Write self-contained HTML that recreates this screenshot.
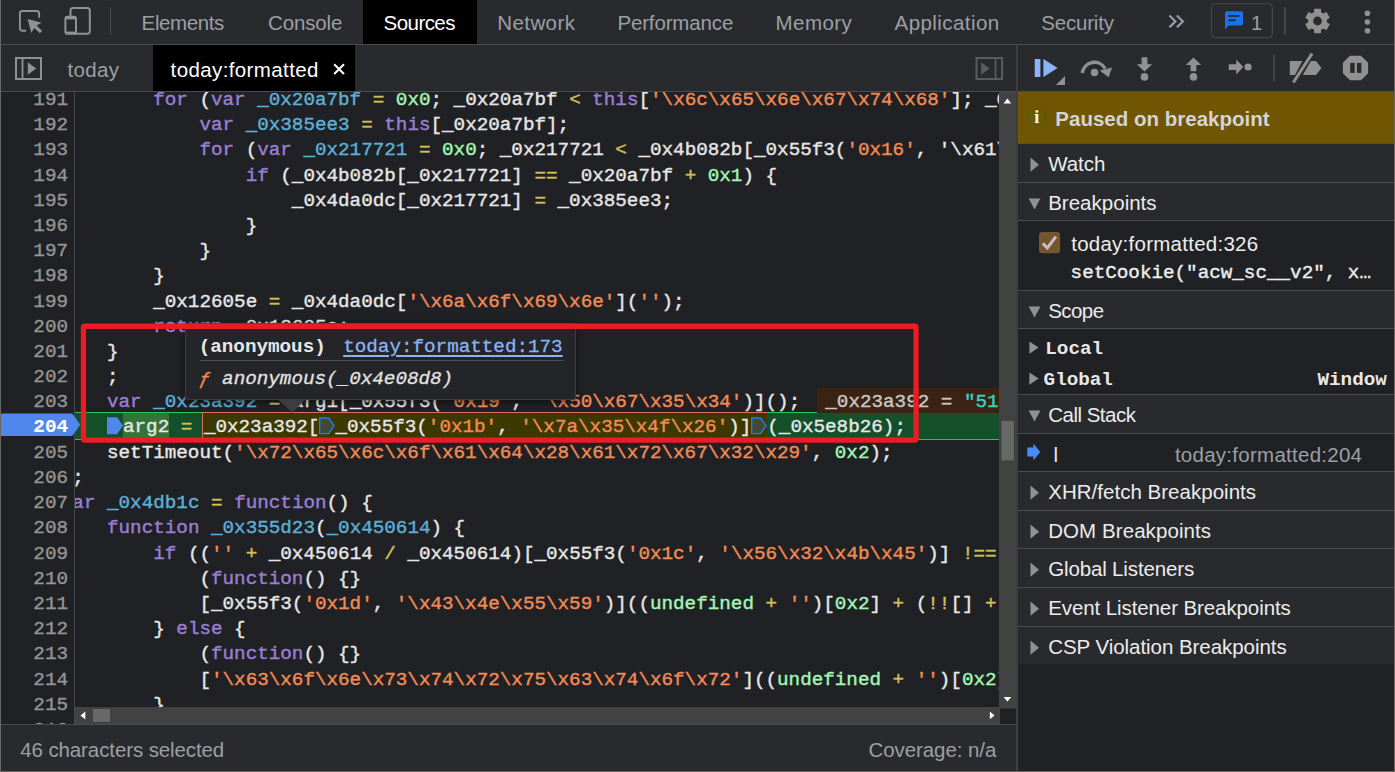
<!DOCTYPE html>
<html><head><meta charset="utf-8">
<style>
*{box-sizing:border-box;margin:0;padding:0}
html,body{width:1395px;height:772px;overflow:hidden;background:#202124}
body{position:relative;font-family:"Liberation Sans",sans-serif;color:#9aa0a6}
.abs{position:absolute}
#top{left:0;top:0;width:1395px;height:45px;background:#292a2d;border-bottom:1px solid #494c50}
.tab{position:absolute;top:0;height:44px;line-height:46.4px;font-size:20.5px;color:#9aa0a6;white-space:pre}
.tab.sel,.ftab.sel{background:#000;color:#fff}
#row2l{left:0;top:45px;width:1016px;height:47px;background:#292a2d;border-bottom:1px solid #494c50}
#row2r{left:1018px;top:45px;width:377px;height:47px;background:#292a2d;border-bottom:1px solid #494c50}
.ftab{position:absolute;top:0;height:46px;line-height:49px;font-size:20.5px;color:#9aa0a6;white-space:pre}
#code{left:0;top:92px;width:999px;height:632px;background:#202124;overflow:hidden;font-family:"Liberation Mono",monospace;font-size:19.25px;color:#e6e6e6;-webkit-text-stroke:0.4px}
#gutter{left:0;top:0;width:75px;height:633px;background:#202124;border-right:1px solid #45474b;z-index:3}
.ln{position:absolute;left:0;width:68px;text-align:right;color:#949494;height:25.2px;line-height:25.2px;white-space:pre}
.cl{position:absolute;left:60.8px;height:25.2px;line-height:25.2px;white-space:pre}
.k{color:#9a7fd5}.d{color:#5db0d7}.n{color:#a1f7b5}.s{color:#f28b54}.o{color:#d2c057}
#vsb{left:999px;top:92px;width:17px;height:615px;background:#424242}
#hsb{left:75px;top:707px;width:941px;height:18px;background:#424242}
#status{left:0;top:724px;width:1016px;height:47px;background:#292a2d;border-top:1px solid #494c50;font-size:20.5px;line-height:46px}
#split{left:1016px;top:45px;width:2px;height:727px;background:#3c3e42}
#right{left:1018px;top:92px;width:377px;height:680px;background:#202124}
.sec{position:absolute;left:0;width:376px;height:39px;background:#292a2d;border-top:1px solid #494c50;color:#ececec;font-size:20.5px;line-height:39px;white-space:pre}

.ln.cur{color:#fff;font-weight:bold;-webkit-text-stroke:0.15px}
.exec{position:absolute;left:75px;width:924px;height:28px;background:#14512a;border-top:1px solid #23c85a;border-bottom:1px solid #23c85a;top:320px}
.bm{display:inline-block;width:16px;height:18px;vertical-align:-3.6px}
.tkbg{position:absolute;left:123px;top:321px;width:46px;height:26px;background:#347438}
.selbg{position:absolute;left:202px;top:320px;width:565px;height:27px;background:#3b3800;border-top:1px solid #d87060;border-left:1px solid #d87060}
.iv{position:absolute;z-index:1;left:817.3px;top:296.4px;height:24.6px;width:200px;padding-left:8px;line-height:28px;background:#3a2312;color:#c8c8c8;white-space:pre;overflow:hidden}
.ivs{color:#35d4c7}

.sec{left:0;width:377px}
.sec .tx{position:absolute;left:30.2px;top:0}
.tri{position:absolute}
.rt{position:absolute;white-space:pre;font-size:20.5px;line-height:24px}
.mono{font-family:"Liberation Mono",monospace;font-size:19.25px;-webkit-text-stroke:0.4px}
#banner{left:0;top:0;width:377px;height:51px;background:#705602}

#glm{left:0;top:320.8px;width:82px;height:24px}
#pop{left:185px;top:323px;width:391px;height:77px;background:#242528;border:1px solid #3c3d41;border-radius:3px;box-shadow:0 2px 6px rgba(0,0,0,.5);z-index:5;font-family:"Liberation Mono",monospace;font-size:19.25px}
.pt{white-space:pre;line-height:25px;-webkit-text-stroke:0.3px}
#redbox{left:78px;top:320px;z-index:7}
</style></head><body>
<div id="top" class="abs">
<svg class="abs" style="left:0;top:0" width="130" height="44" viewBox="0 0 130 44">
<g fill="none" stroke="#919191" stroke-width="1.9">
<path d="M26.2 30.8H22.4a2.5 2.5 0 0 1-2.5-2.5V13.5a2.5 2.5 0 0 1 2.5-2.5H36.6a2.5 2.5 0 0 1 2.5 2.5V17.8"/>
</g>
<path d="M27.7 19L41.5 22.7L36.6 25.6L42.2 31L39.9 33.3L34.3 27.9L31.3 32.9Z" fill="#919191"/>
<g fill="none" stroke="#919191" stroke-width="2">
<path d="M70.5 16V10.4a2.5 2.5 0 0 1 2.5-2.5H87.3a2.5 2.5 0 0 1 2.5 2.5V31.2a2.5 2.5 0 0 1-2.5 2.5H75"/>
<rect x="65.4" y="16.8" width="10.6" height="16.9" rx="2"/>
</g>
<rect x="65.4" y="16" width="10.6" height="3.4" fill="#919191"/><rect x="65.4" y="31.6" width="10.6" height="2.6" fill="#919191"/>
<rect x="110" y="7" width="1" height="28" fill="#494c50"/>
</svg>
<span class="tab" style="left:141.6px;letter-spacing:-0.384px">Elements</span>
<span class="tab" style="left:268px;letter-spacing:-0.146px">Console</span>
<span class="tab sel" style="left:363px;width:114px;padding-left:20.6px;letter-spacing:-0.560px">Sources</span>
<span class="tab" style="left:497.3px;letter-spacing:0.402px">Network</span>
<span class="tab" style="left:617.4px;letter-spacing:-0.142px">Performance</span>
<span class="tab" style="left:775.6px;letter-spacing:0.442px">Memory</span>
<span class="tab" style="left:894.6px;letter-spacing:0.428px">Application</span>
<span class="tab" style="left:1041.2px;letter-spacing:-0.183px">Security</span>
<svg class="abs" style="left:1160px;top:0" width="235" height="44" viewBox="1160 0 235 44">
<g fill="none" stroke="#9aa0a6" stroke-width="2.1"><path d="M1169.4 15.5L1175.4 21.4L1169.4 27.3"/><path d="M1176.9 15.5L1182.9 21.4L1176.9 27.3"/></g>
<rect x="1211.4" y="3.7" width="61" height="34" rx="4" fill="none" stroke="#494c50" stroke-width="1"/>
<path d="M1227 11.3H1241a2 2 0 0 1 2 2V23.6a2 2 0 0 1-2 2H1228.6L1225 29.6V13.3a2 2 0 0 1 2-2Z" fill="#1a73e8"/>
<rect x="1228.4" y="15" width="11" height="1.8" fill="#292a2d"/><rect x="1228.4" y="19.4" width="7.4" height="1.8" fill="#292a2d"/>
<rect x="1284.1" y="7.3" width="1.5" height="27.5" fill="#494c50"/>
<g fill="#919191"><circle cx="1367.4" cy="13.2" r="2.8"/><circle cx="1367.4" cy="22" r="2.8"/><circle cx="1367.4" cy="30.8" r="2.8"/></g>
<g transform="translate(1317.5 21)"><g fill="#919191">
<circle r="9.5"/>
<g id="teeth"><rect x="-3.5" y="-12.3" width="7" height="24.6" rx="0.8"/></g>
<rect x="-3.5" y="-12.3" width="7" height="24.6" rx="0.8" transform="rotate(60)"/><rect x="-3.5" y="-12.3" width="7" height="24.6" rx="0.8" transform="rotate(120)"/>
</g><circle r="4.4" fill="#292a2d"/></g>
</svg>
<span class="tab" style="left:1251px;color:#9aa0a6;letter-spacing:0">1</span>
</div>
<div id="row2l" class="abs">
<svg class="abs" style="left:0;top:0" width="60" height="46" viewBox="0 45 60 46">
<rect x="16" y="58" width="25" height="21" fill="none" stroke="#919191" stroke-width="2"/>
<rect x="21.6" y="58" width="1.8" height="21" fill="#919191"/>
<path d="M27.8 62.2L36.2 68.5L27.8 74.8Z" fill="#919191"/>
</svg>
<span class="ftab" style="left:67.4px;letter-spacing:0.389px">today</span>
<span class="ftab sel" style="left:153px;width:202px;padding-left:17.6px;letter-spacing:0.383px">today:formatted</span>
<svg class="abs" style="left:330px;top:14px" width="20" height="20" viewBox="0 0 20 20"><path d="M4.2 5.2L14 15M14 5.2L4.2 15" stroke="#fff" stroke-width="2" fill="none"/></svg>
<svg class="abs" style="left:970px;top:0" width="40" height="46" viewBox="970 45 40 46">
<rect x="976.5" y="58" width="25.6" height="21" fill="none" stroke="#5a5b5e" stroke-width="2"/>
<rect x="994.6" y="58" width="1.8" height="21" fill="#5a5b5e"/>
<path d="M981.2 62.2L989.6 68.5L981.2 74.8Z" fill="#5a5b5e"/>
</svg>
</div>
<div id="row2r" class="abs">
<svg class="abs" style="left:0;top:0" width="376" height="46" viewBox="1018 45 376 46">
<g fill="#8ab4f8"><rect x="1034.7" y="59" width="5.7" height="18"/><path d="M1043.4 59L1057.6 68L1043.4 77Z"/></g>
<g fill="#919191">
<path d="M1065 75.9V85H1056Z"/>
<circle cx="1094.5" cy="72.5" r="3.8"/>
<path d="M1082.3 73A12.3 12.3 0 0 1 1105.2 68.6" fill="none" stroke="#919191" stroke-width="3.5"/><path d="M1112.2 67.6L1099.6 70.4L1108.6 77.2Z"/>
<path d="M1141.6 57.3H1147.4V64.2H1152.2L1144.5 71.4L1136.8 64.2H1141.6Z"/><circle cx="1144.5" cy="76.9" r="3.8"/>
<path d="M1193.5 57.4L1201.2 65H1196.4V71.2H1190.6V65H1185.8Z"/><circle cx="1193.5" cy="76.9" r="3.8"/>
<path d="M1228.8 64.2H1236.2V59.6L1243.3 67L1236.2 74.6V69.9H1228.8Z"/><circle cx="1248.1" cy="67" r="3.6"/>
<rect x="1273.3" y="54" width="1.4" height="28" fill="#4a4c50"/>
<path d="M1289.8 61H1302.3L1295 74.9H1289.8Z"/>
<path d="M1310.8 61H1316L1321.4 67.9L1316 74.9H1302.8Z"/>
<path d="M1310.8 52.8L1313.4 54.2L1294.6 83.2L1292 81.8Z"/>
<path d="M1350 55.7H1361L1368.1 62.8V73.2L1361 80.2H1350L1342.9 73.2V62.8Z"/>
</g>
<g fill="#292a2d"><rect x="1350.2" y="62.9" width="4.4" height="10"/><rect x="1357" y="62.9" width="4.4" height="10"/></g>
</svg>
</div>
<div id="code" class="abs"><!--CODE-->
<div class="cl" style="top:-4.0px">        <span class="k">for</span> (<span class="k">var</span> <span class="d">_0x20a7bf</span> <span class="o">=</span> <span class="n">0x0</span>; _0x20a7bf <span class="o">&lt;</span> <span class="k">this</span>[<span class="s">'\x6c\x65\x6e\x67\x74\x68'</span>]; _0</div>
<div class="cl" style="top:21.2px">            <span class="k">var</span> <span class="d">_0x385ee3</span> <span class="o">=</span> <span class="k">this</span>[_0x20a7bf];</div>
<div class="cl" style="top:46.4px">            <span class="k">for</span> (<span class="k">var</span> <span class="d">_0x217721</span> <span class="o">=</span> <span class="n">0x0</span>; _0x217721 <span class="o">&lt;</span> _0x4b082b[_0x55f3(<span class="s">'0x16'</span>, &#x27;\x61\</div>
<div class="cl" style="top:71.6px">                <span class="k">if</span> (_0x4b082b[_0x217721] <span class="o">==</span> _0x20a7bf <span class="o">+</span> <span class="n">0x1</span>) {</div>
<div class="cl" style="top:96.8px">                    _0x4da0dc[_0x217721] <span class="o">=</span> _0x385ee3;</div>
<div class="cl" style="top:122.0px">                }</div>
<div class="cl" style="top:147.2px">            }</div>
<div class="cl" style="top:172.4px">        }</div>
<div class="cl" style="top:197.6px">        _0x12605e <span class="o">=</span> _0x4da0dc[<span class="s">'\x6a\x6f\x69\x6e'</span>](<span class="s">''</span>);</div>
<div class="cl" style="top:222.8px">        <span class="k">return</span> _0x12605e;</div>
<div class="cl" style="top:248.0px">    }</div>
<div class="cl" style="top:273.2px">    ;</div>
<div class="cl" style="top:298.4px">    <span class="k">var</span> <span class="d">_0x23a392</span> <span class="o">=</span> arg1[_0x55f3(<span class="s">'0x19'</span>, <span class="s">'\x50\x67\x35\x34'</span>)]();</div><div class="iv">_0x23a392 = <span class="ivs">"51</span></div>
<div class="exec"></div><div class="tkbg"></div><div class="selbg"></div><div class="cl" style="top:322.6px">    <svg class="bm" viewBox="0 0 16 18"><path d="M0 0.3H10L16 8.8L10 17.3H0Z" fill="#5186ec"/></svg>arg2 <span class="o">=</span> _0x23a392[<svg class="bm" viewBox="0 0 16 18"><path d="M0.7 1H9.7L15.1 8.8L9.7 16.6H0.7Z" fill="#414a34" stroke="#1a7ff0" stroke-width="1.4"/></svg>_0x55f3(<span class="s">'0x1b'</span>, <span class="s">'\x7a\x35\x4f\x26'</span>)]<svg class="bm" viewBox="0 0 16 18"><path d="M0.7 1H9.7L15.1 8.8L9.7 16.6H0.7Z" fill="#414a34" stroke="#1a7ff0" stroke-width="1.4"/></svg>(_0x5e8b26);</div>
<div class="cl" style="top:348.8px">    setTimeout(<span class="s">'\x72\x65\x6c\x6f\x61\x64\x28\x61\x72\x67\x32\x29'</span>, <span class="n">0x2</span>);</div>
<div class="cl" style="top:374.0px">};</div>
<div class="cl" style="top:399.2px"><span class="k">var</span> <span class="d">_0x4db1c</span> <span class="o">=</span> <span class="k">function</span>() {</div>
<div class="cl" style="top:424.4px">    <span class="k">function</span> <span class="d">_0x355d23</span>(<span class="d">_0x450614</span>) {</div>
<div class="cl" style="top:449.6px">        <span class="k">if</span> ((<span class="s">''</span> <span class="o">+</span> _0x450614 <span class="o">/</span> _0x450614)[_0x55f3(<span class="s">'0x1c'</span>, <span class="s">'\x56\x32\x4b\x45'</span>)] <span class="o">!==</span> </div>
<div class="cl" style="top:474.8px">            (<span class="k">function</span>() {}</div>
<div class="cl" style="top:500.0px">            [_0x55f3(<span class="s">'0x1d'</span>, <span class="s">'\x43\x4e\x55\x59'</span>)]((<span class="n">undefined</span> <span class="o">+</span> <span class="s">''</span>)[<span class="n">0x2</span>] <span class="o">+</span> (<span class="o">!!</span>[] <span class="o">+</span> </div>
<div class="cl" style="top:525.2px">        } <span class="k">else</span> {</div>
<div class="cl" style="top:550.4px">            (<span class="k">function</span>() {}</div>
<div class="cl" style="top:575.6px">            [<span class="s">'\x63\x6f\x6e\x73\x74\x72\x75\x63\x74\x6f\x72'</span>]((<span class="n">undefined</span> <span class="o">+</span> <span class="s">''</span>)[<span class="n">0x2</span>]</div>
<div class="cl" style="top:600.8px">        }</div>
<div class="cl" style="top:626.0px">    }</div>
<!--/CODE--><div id="gutter" class="abs"><!--LN-->
<div id="glm" class="abs"><svg width="82" height="24" viewBox="0 0 82 24"><path d="M1 0.4H72.3L80.2 11.7L72.3 23H1Z" fill="#5186ec"/></svg></div>
<div class="ln" style="top:-4.0px">191</div>
<div class="ln" style="top:21.2px">192</div>
<div class="ln" style="top:46.4px">193</div>
<div class="ln" style="top:71.6px">194</div>
<div class="ln" style="top:96.8px">195</div>
<div class="ln" style="top:122.0px">196</div>
<div class="ln" style="top:147.2px">197</div>
<div class="ln" style="top:172.4px">198</div>
<div class="ln" style="top:197.6px">199</div>
<div class="ln" style="top:222.8px">200</div>
<div class="ln" style="top:248.0px">201</div>
<div class="ln" style="top:273.2px">202</div>
<div class="ln" style="top:298.4px">203</div>
<div class="ln cur" style="top:322.6px">204</div>
<div class="ln" style="top:348.8px">205</div>
<div class="ln" style="top:374.0px">206</div>
<div class="ln" style="top:399.2px">207</div>
<div class="ln" style="top:424.4px">208</div>
<div class="ln" style="top:449.6px">209</div>
<div class="ln" style="top:474.8px">210</div>
<div class="ln" style="top:500.0px">211</div>
<div class="ln" style="top:525.2px">212</div>
<div class="ln" style="top:550.4px">213</div>
<div class="ln" style="top:575.6px">214</div>
<div class="ln" style="top:600.8px">215</div>
<div class="ln" style="top:626.0px">216</div>
<!--/LN--></div></div>
<div id="pop" class="abs"><span class="abs pt" style="left:12.7px;top:10.5px;font-weight:bold;color:#e8e8e8;-webkit-text-stroke:0">(anonymous)</span><span class="abs pt" style="left:157.2px;top:10.5px;color:#8ab4f8;text-decoration:underline;text-decoration-thickness:1.5px;text-underline-offset:3px">today:formatted:173</span><div class="abs" style="left:13.5px;top:35.5px;width:364px;height:1px;background:#4a4c50"></div><span class="abs pt" style="left:13px;top:42.5px;font-style:italic;color:#e3e3e3"><span style="color:#f28b54">ƒ</span> anonymous(_0x4e08d8)</span></div>
<svg class="abs" style="left:276px;top:399px;z-index:6" width="32" height="16" viewBox="0 0 32 16"><path d="M2.5 1H28.8L16.3 14Z" fill="#3c3d41"/></svg>
<svg id="redbox" class="abs" width="846" height="126" viewBox="78 320 846 126"><rect x="83.45" y="326.25" width="832.6" height="113.8" rx="1.2" fill="none" stroke="#ec1c24" stroke-width="5.3"/></svg>
<div id="vsb" class="abs"><svg class="abs" style="left:0;top:0" width="17" height="615" viewBox="0 0 17 615"><path d="M4.6 11.6L8.4 6.4L12.2 11.6Z" fill="#fff"/><path d="M4.6 605L8.4 609.6L12.2 605Z" fill="#fff"/><rect x="2.5" y="329" width="12.4" height="39.5" fill="#686868"/></svg></div>
<div id="hsb" class="abs"><svg class="abs" style="left:0;top:0" width="941" height="18" viewBox="0 0 941 18"><path d="M10.3 4.4L5.5 8.4L10.3 12.4Z" fill="#fff"/><path d="M914.8 4.6L919.6 8.4L914.8 12.2Z" fill="#fff"/><rect x="18" y="2" width="17" height="12.9" fill="#686868"/><rect x="925" y="1.5" width="16" height="15.5" fill="#202124"/></svg></div>
<div id="status" class="abs"><span class="rt" style="left:20.2px;top:13px;letter-spacing:-0.103px;color:#9aa0a6">46 characters selected</span><span class="rt" style="left:868.5px;top:13px;letter-spacing:-0.083px;color:#9aa0a6">Coverage: n/a</span></div>
<div id="split" class="abs"></div>
<div id="right" class="abs">
<div id="banner" class="abs"><svg class="abs" style="left:9px;top:15.5px" width="20" height="20" viewBox="0 0 20 20"><circle cx="9.8" cy="9.4" r="8.2" fill="#645d06" stroke="#55570b" stroke-width="1"/><text x="9.8" y="15.3" text-anchor="middle" font-family="Liberation Serif,serif" font-weight="bold" font-size="18" fill="#fbf9f0">i</text></svg><span class="rt" style="left:37.3px;top:14.8px;font-weight:bold;color:#d4d4d6;letter-spacing:0.012px">Paused on breakpoint</span></div>
<div class="sec" style="top:51px;height:39px"><svg class="tri" style="left:12px;top:12.6px" width="10" height="16" viewBox="0 0 10 16"><path d="M0.5 0.6L9 7.7L0.5 14.8Z" fill="#919191"/></svg><span class="tx" style="letter-spacing:-0.029px">Watch</span></div>
<div class="sec" style="top:90px;height:38px"><svg class="tri" style="left:9.8px;top:14.7px" width="14" height="12" viewBox="0 0 14 12"><path d="M0.7 0.5H12.4L6.55 11.4Z" fill="#919191"/></svg><span class="tx" style="letter-spacing:0.012px">Breakpoints</span></div>
<div class="abs" style="left:0;top:128px;width:377px;height:70px;border-top:1px solid #494c50"></div>
<svg class="abs" style="left:21.1px;top:139.8px" width="22" height="22" viewBox="0 0 22 22"><rect x="0" y="0" width="21.1" height="21.2" rx="3.2" fill="#75562f"/><path d="M3.8 11.4L8.3 16L16.9 4.6" stroke="#c4c2c0" stroke-width="3" fill="none"/></svg>
<span class="rt" style="left:53.2px;top:140.3px;color:#ededed;letter-spacing:0.256px">today:formatted:326</span>
<span class="rt mono" style="left:52.6px;top:169px;color:#ededed">setCookie("acw_sc__v2", x…</span>
<div class="sec" style="top:198px;height:38px"><svg class="tri" style="left:9.8px;top:14.7px" width="14" height="12" viewBox="0 0 14 12"><path d="M0.7 0.5H12.4L6.55 11.4Z" fill="#919191"/></svg><span class="tx" style="letter-spacing:-0.568px">Scope</span></div>
<div class="abs" style="left:0;top:236px;width:377px;height:66px;border-top:1px solid #494c50"></div>
<svg class="tri" style="left:10.6px;top:249.3px" width="10" height="14" viewBox="0 0 10 14"><path d="M0.4 0.4L9.6 6.6L0.4 12.8Z" fill="#919191"/></svg>
<span class="rt mono" style="left:27.3px;top:244.5px;color:#e8e8e8;font-weight:bold;-webkit-text-stroke:0">Local</span>
<svg class="tri" style="left:10.6px;top:280.2px" width="10" height="14" viewBox="0 0 10 14"><path d="M0.4 0.4L9.6 6.6L0.4 12.8Z" fill="#919191"/></svg>
<span class="rt mono" style="left:25.6px;top:275.5px;color:#e8e8e8;font-weight:bold;-webkit-text-stroke:0">Global</span>
<span class="rt mono" style="left:299.5px;top:275.5px;color:#e8e8e8;font-weight:bold;-webkit-text-stroke:0">Window</span>
<div class="sec" style="top:302px;height:39px"><svg class="tri" style="left:9.8px;top:14.7px" width="14" height="12" viewBox="0 0 14 12"><path d="M0.7 0.5H12.4L6.55 11.4Z" fill="#919191"/></svg><span class="tx" style="letter-spacing:-0.508px">Call Stack</span></div>
<div class="abs" style="left:0;top:341px;width:377px;height:38px;border-top:1px solid #494c50;background:#202124"></div>
<svg class="abs" style="left:9px;top:351px" width="14" height="18" viewBox="0 0 14 18"><path d="M0.3 4.6H6.4V0.5L13.3 9L6.4 17.4V13.4H0.3Z" fill="#4c8bf5"/></svg>
<span class="rt" style="left:35.4px;top:351px;color:#e8eaed">l</span>
<span class="rt" style="left:156.9px;top:351px;color:#9aa0a6;letter-spacing:0.266px">today:formatted:204</span>
<div class="sec" style="top:379px;height:39px"><svg class="tri" style="left:12px;top:12.6px" width="10" height="16" viewBox="0 0 10 16"><path d="M0.5 0.6L9 7.7L0.5 14.8Z" fill="#919191"/></svg><span class="tx" style="letter-spacing:0.025px">XHR/fetch Breakpoints</span></div>
<div class="sec" style="top:418px;height:38px"><svg class="tri" style="left:12px;top:12.6px" width="10" height="16" viewBox="0 0 10 16"><path d="M0.5 0.6L9 7.7L0.5 14.8Z" fill="#919191"/></svg><span class="tx" style="letter-spacing:0.075px">DOM Breakpoints</span></div>
<div class="sec" style="top:456px;height:39px"><svg class="tri" style="left:12px;top:12.6px" width="10" height="16" viewBox="0 0 10 16"><path d="M0.5 0.6L9 7.7L0.5 14.8Z" fill="#919191"/></svg><span class="tx" style="letter-spacing:-0.146px">Global Listeners</span></div>
<div class="sec" style="top:495px;height:39px"><svg class="tri" style="left:12px;top:12.6px" width="10" height="16" viewBox="0 0 10 16"><path d="M0.5 0.6L9 7.7L0.5 14.8Z" fill="#919191"/></svg><span class="tx" style="letter-spacing:-0.096px">Event Listener Breakpoints</span></div>
<div class="sec" style="top:534px;height:38px"><svg class="tri" style="left:12px;top:12.6px" width="10" height="16" viewBox="0 0 10 16"><path d="M0.5 0.6L9 7.7L0.5 14.8Z" fill="#919191"/></svg><span class="tx" style="letter-spacing:-0.052px">CSP Violation Breakpoints</span></div>
</div>
<div class="abs" style="left:0;top:0;width:1395px;height:772px;border:1px solid #686662;border-top:none;z-index:20;pointer-events:none"></div>
</body></html>
